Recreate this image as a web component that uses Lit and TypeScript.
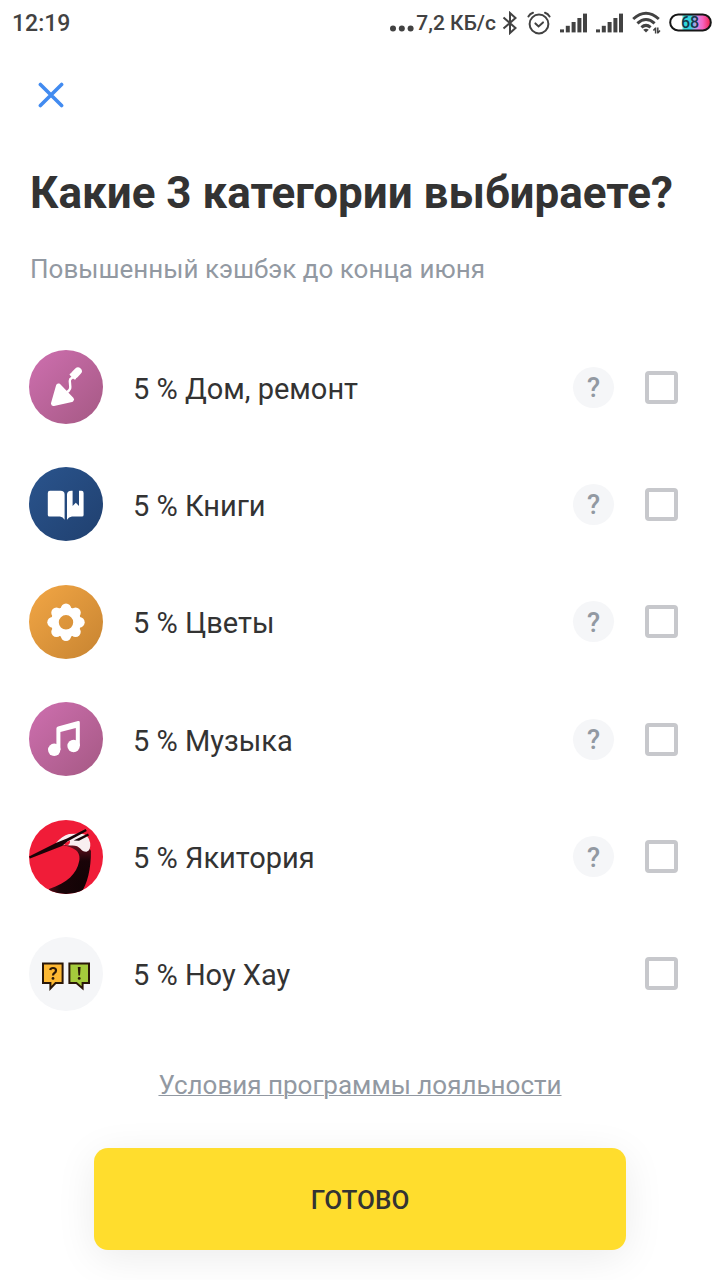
import { LitElement, html, svg, css, nothing } from "lit";
import { customElement, property, state } from "lit/decorators.js";

type IconName = "trowel" | "book" | "flower" | "music" | "crane" | "knowhow";

interface Category {
  id: string;
  title: string;
  icon: IconName;
  hint: boolean;
}

const CATEGORIES: Category[] = [
  { id: "home", title: "5 % Дом, ремонт", icon: "trowel", hint: true },
  { id: "books", title: "5 % Книги", icon: "book", hint: true },
  { id: "flowers", title: "5 % Цветы", icon: "flower", hint: true },
  { id: "music", title: "5 % Музыка", icon: "music", hint: true },
  { id: "yakitoria", title: "5 % Якитория", icon: "crane", hint: true },
  { id: "knowhow", title: "5 % Ноу Хау", icon: "knowhow", hint: false },
];

const PETALS = [0, 45, 90, 135, 180, 225, 270, 315];

const gradient = (from: string, to: string) => svg`
  <defs>
    <linearGradient id="bg" x1="0.1" y1="0.1" x2="0.9" y2="0.9">
      <stop offset="0" stop-color=${from}></stop>
      <stop offset="1" stop-color=${to}></stop>
    </linearGradient>
  </defs>
  <circle cx="37" cy="37" r="37" fill="url(#bg)"></circle>`;

const ICONS: Record<IconName, unknown> = {
  trowel: svg`
    ${gradient("#ca6dab", "#a95b88")}
    <path d="M29.5 36 L42.5 49.5 L24.5 53.5 Z" fill="#fff" stroke="#fff" stroke-width="5" stroke-linejoin="round"></path>
    <path d="M37 43 L40 40.5 Q41.5 39 41.3 37 L40.8 31 Q40.8 29 42.5 28.2 L45 26.5" fill="none" stroke="#fff" stroke-width="2.4"></path>
    <path d="M45.8 24.5 L49 21.2" stroke="#fff" stroke-width="7.6" stroke-linecap="round"></path>
    <path d="M41.8 24.5 L45.8 28.3" stroke="#fff" stroke-width="2.4" stroke-linecap="round"></path>`,
  book: svg`
    ${gradient("#29528a", "#214272")}
    <path d="M21 23.8 H31.5 Q35.6 23.8 35.6 27.5 V52.8 Q34 49.8 31 49.6 H20.5 Q18.8 49.6 18.8 48 V26 Q18.8 23.8 21 23.8 Z" fill="#fff"></path>
    <path d="M38 27.5 Q38 24 42.5 23.8 H43.6 V39 L46.8 35.8 L50 39 V23.8 H52.5 Q54.6 23.8 54.6 26 V48 Q54.6 49.6 53 49.6 H43 Q39.6 49.8 38 52.8 Z" fill="#fff"></path>`,
  flower: svg`
    ${gradient("#eea343", "#cb8733")}
    <circle cx="37" cy="37.3" r="11.2" fill="none" stroke="#fff" stroke-width="8"></circle>
    ${PETALS.map(
      (a) => svg`<circle cx="37" cy="23.8" r="5.2" fill="#fff" transform="rotate(${a} 37 37.3)"></circle>`
    )}`,
  music: svg`
    ${gradient("#ca6dab", "#a95b88")}
    <circle cx="25.2" cy="47.8" r="6.2" fill="#fff"></circle>
    <circle cx="44.6" cy="44" r="6.2" fill="#fff"></circle>
    <path d="M27.4 48 V26.5 Q27.4 24.8 29 24.4 L49 19 Q50.8 18.6 50.8 20.4 V44 H46.8 V26 L31.4 30 V48 Z" fill="#fff"></path>`,
  crane: svg`
    <defs>
      <clipPath id="disc"><circle cx="37" cy="37" r="37"></circle></clipPath>
      <radialGradient id="neck" cx="56" cy="66" r="42" gradientUnits="userSpaceOnUse">
        <stop offset="0" stop-color="#120305"></stop>
        <stop offset="0.6" stop-color="#1a0408"></stop>
        <stop offset="1" stop-color="#6a101e"></stop>
      </radialGradient>
    </defs>
    <g clip-path="url(#disc)">
      <rect width="74" height="74" fill="#f01c38"></rect>
      <path d="M32 25 Q42 26.4 47 30.3 Q51.4 34 50.2 41 C47.6 54 38.7 62.5 20 69 L20 76 L50 76 C58 66 62 50 62 31 L58 24 Z" fill="url(#neck)"></path>
      <path d="M27 23 Q33 16 40 14 L52 13.4 Q60 14.4 61.2 23 Q62 30.4 57.5 31.8 Q53.6 32 51.5 28.8 Q48 24.6 41 25.6 L33 24.6 Z" fill="#f8eef0"></path>
      <path d="M34.6 23.6 L41 20.6 Q41.4 24.8 38 25.4 Q35.4 25.4 34.6 23.6 Z" fill="#f01c38"></path>
      <path d="M0 36.4 L27.4 22.8 L38 18.4 L56.6 9 L57.8 11 L38.4 21.4 L33 26 L1 38.4 Z" fill="#180307"></path>
      <path d="M44.6 20.6 L59 13.6 L60 15.6 L50 20.8 Z" fill="#180307"></path>
    </g>`,
  knowhow: svg`
    <circle cx="37" cy="37" r="37" fill="#f5f6f8"></circle>
    <path d="M14 26.4 H33.6 V46 H26.6 L21.4 51.4 V46 H14 Z" fill="#fdb833" stroke="#2a1708" stroke-width="2"></path>
    <path d="M40.4 26.4 H60 V46 H53.6 V51.4 L47.4 46 H40.4 Z" fill="#a5cb3c" stroke="#2a1708" stroke-width="2"></path>
    <path d="M21.2 33 Q21.6 31 24 31 Q27 31 27 33.4 Q27 35 25.4 36 Q24 36.8 24 38.6" fill="none" stroke="#2a1708" stroke-width="2.2"></path>
    <circle cx="24" cy="41.4" r="1.4" fill="#2a1708"></circle>
    <path d="M48.8 30 H51.6 L51 38.6 H49.4 Z" fill="#2a1708"></path>
    <circle cx="50.2" cy="41.4" r="1.4" fill="#2a1708"></circle>`,
};

@customElement("category-icon")
class CategoryIcon extends LitElement {
  @property() name: IconName = "trowel";

  static styles = css`
    :host {
      display: block;
      flex: none;
      width: 74px;
      height: 74px;
    }
    .icon {
      display: block;
      width: 100%;
      height: 100%;
    }
  `;

  render() {
    return html`<svg class="icon" viewBox="0 0 74 74" aria-hidden="true">${ICONS[this.name]}</svg>`;
  }
}

@customElement("status-bar")
class StatusBar extends LitElement {
  static styles = css`
    :host {
      display: flex;
      align-items: center;
      justify-content: space-between;
      height: 46px;
      padding: 0 8px 0 12px;
      color: #424242;
      font-size: 23px;
      font-weight: 500;
    }
    .indicators {
      display: flex;
      align-items: center;
    }
    .speed {
      display: flex;
      align-items: center;
      font-size: 21px;
    }
    .indicators svg {
      display: block;
      flex: none;
    }
    .bluetooth {
      margin-left: 6px;
    }
    .alarm,
    .signal,
    .wifi {
      margin-left: 9px;
    }
    .battery {
      margin-left: 8px;
    }
    .level {
      font: 500 16px Roboto, sans-serif;
    }
  `;

  private signal() {
    return html`<svg class="signal" width="27" height="20" viewBox="0 0 27 20" fill="#424242" aria-hidden="true">
      <rect x="0" y="16.4" width="4" height="3"></rect>
      <rect x="5.8" y="12.8" width="4" height="6.6"></rect>
      <rect x="11.6" y="9" width="4" height="10.4"></rect>
      <rect x="17.4" y="5" width="4" height="14.4"></rect>
      <rect x="23" y="0.6" width="4" height="18.8"></rect>
    </svg>`;
  }

  render() {
    return html`
      <span class="clock">12:19</span>
      <div class="indicators">
        <span class="speed">
          <svg width="27" height="22" viewBox="0 0 27 22" fill="#424242" aria-hidden="true">
            <circle cx="4" cy="16.4" r="3"></circle>
            <circle cx="12.8" cy="16.4" r="3"></circle>
            <circle cx="21.6" cy="16.4" r="3"></circle>
          </svg>
          7,2 КБ/с
        </span>
        <svg class="bluetooth" width="16" height="24" viewBox="0 0 16 24" fill="none" stroke="#424242" stroke-width="2" aria-hidden="true">
          <path d="M1.5 6.5 L13.5 17 L8 22 V2 L13.5 7 L1.5 17.5"></path>
        </svg>
        <svg class="alarm" width="24" height="24" viewBox="0 0 24 24" fill="none" stroke="#424242" stroke-width="2" stroke-linecap="round" aria-hidden="true">
          <circle cx="12" cy="13" r="9.4"></circle>
          <path d="M8.4 12.4 L11.6 15.4 L16 11.4"></path>
          <path d="M1.4 5.4 Q3 2.8 6 1.8"></path>
          <path d="M22.6 5.4 Q21 2.8 18 1.8"></path>
        </svg>
        ${this.signal()} ${this.signal()}
        <svg class="wifi" width="29" height="24" viewBox="0 0 29 24" fill="none" stroke="#424242" stroke-width="3" aria-hidden="true">
          <path d="M1.2 8 Q14 -3.5 26.8 8"></path>
          <path d="M5.4 12.4 Q14 4.6 22.6 12.4"></path>
          <path d="M9.4 16.4 Q14 12.4 18.6 16.4"></path>
          <path d="M11.2 18.8 Q14 16.6 16.8 18.8 L14 21.6 Z" fill="#424242" stroke="none"></path>
          <path d="M23.6 16.4 V22.4 M21.4 19.6 L23.6 17 M25.8 16.4 V22.4 M28 19.6 L25.8 22" stroke-width="1.5"></path>
        </svg>
        <svg class="battery" width="43" height="20" viewBox="0 0 43 20" role="img" aria-label="68">
          <defs>
            <linearGradient id="charge">
              <stop offset="0.28" stop-color="#ffffff"></stop>
              <stop offset="0.34" stop-color="#2fd9d6"></stop>
              <stop offset="0.5" stop-color="#35d3e2"></stop>
              <stop offset="0.66" stop-color="#d98be8"></stop>
              <stop offset="0.8" stop-color="#f564c0"></stop>
              <stop offset="1" stop-color="#f2214a"></stop>
            </linearGradient>
          </defs>
          <rect x="1.2" y="1.4" width="40.6" height="16" rx="8" fill="url(#charge)" stroke="#161616" stroke-width="2"></rect>
          <text class="level" x="21" y="15" text-anchor="middle" fill="#15384a">68</text>
        </svg>
      </div>
    `;
  }
}

@customElement("app-root")
class AppRoot extends LitElement {
  @state() private selected = new Set<string>();

  static styles = css`
    * {
      box-sizing: border-box;
    }
    :host {
      display: flex;
      flex-direction: column;
      min-height: 100vh;
      box-sizing: border-box;
      background: #fff;
      color: #333;
      font-family: Roboto, sans-serif;
    }
    button {
      border: 0;
      padding: 0;
      font-family: inherit;
      cursor: pointer;
    }
    .close {
      display: grid;
      place-items: center;
      align-self: flex-start;
      width: 50px;
      height: 50px;
      margin: 24px 0 0 26px;
      background: none;
    }
    .head {
      padding: 0 30px;
    }
    .title {
      margin: 45px 0 0;
      font-size: 44px;
      line-height: 56px;
      font-weight: 700;
    }
    .subtitle {
      margin: 32px 0 0;
      font-size: 26px;
      line-height: 32px;
      color: #9299a2;
    }
    .list {
      display: flex;
      flex: 1;
      flex-direction: column;
      justify-content: space-between;
      gap: 24px;
      margin: 65px 0 0;
      padding: 0 42px 0 29px;
      list-style: none;
    }
    .row {
      display: flex;
      align-items: center;
    }
    .name {
      flex: 1;
      padding: 3px 0 0 30px;
      font-size: 29px;
      line-height: 36px;
    }
    .hint {
      width: 41px;
      height: 41px;
      margin-right: 31px;
      padding-top: 2px;
      border-radius: 50%;
      background: #f5f6f8;
      color: #9299a2;
      font-size: 27px;
      font-weight: 500;
    }
    .check {
      appearance: none;
      width: 33px;
      height: 33px;
      margin: 0;
      border: 4px solid #c7c8cc;
      border-radius: 4px;
      background: #fff;
    }
    .check:checked {
      border-color: #ffdd2d;
      background: #ffdd2d;
    }
    .foot {
      display: flex;
      flex-direction: column;
      align-items: center;
      padding: 58px 94px 30px;
    }
    .terms {
      color: #9299a2;
      font-size: 26px;
      line-height: 32px;
      text-decoration: underline;
      text-decoration-thickness: 1px;
    }
    .done {
      width: 100%;
      height: 102px;
      margin-top: 47px;
      padding-top: 2px;
      border-radius: 14px;
      background: #ffdd2d;
      box-shadow: 0 8px 40px rgba(0, 0, 0, 0.08);
      color: #333;
      font-size: 26px;
      font-weight: 500;
    }
  `;

  private toggle(id: string, on: boolean) {
    const next = new Set(this.selected);
    if (on) next.add(id);
    else next.delete(id);
    this.selected = next;
  }

  render() {
    return html`
      <status-bar></status-bar>
      <button class="close" type="button" aria-label="Закрыть">
        <svg width="26" height="26" viewBox="0 0 26 26" fill="none" stroke="#428bf0" stroke-width="3.6" stroke-linecap="round">
          <path d="M2.4 2.4 L23.6 23.6 M23.6 2.4 L2.4 23.6"></path>
        </svg>
      </button>
      <header class="head">
        <h1 class="title">Какие 3 категории выбираете?</h1>
        <p class="subtitle">Повышенный кэшбэк до конца июня</p>
      </header>
      <ul class="list">
        ${CATEGORIES.map(
          (c) => html`<li class="row">
            <category-icon name=${c.icon}></category-icon>
            <label class="name" for=${c.id}>${c.title}</label>
            ${c.hint ? html`<button class="hint" type="button">?</button>` : nothing}
            <input
              class="check"
              type="checkbox"
              id=${c.id}
              .checked=${this.selected.has(c.id)}
              @change=${(e: Event) => this.toggle(c.id, (e.target as HTMLInputElement).checked)}
            />
          </li>`
        )}
      </ul>
      <footer class="foot">
        <a class="terms" href="#terms">Условия программы лояльности</a>
        <button class="done" type="button">ГОТОВО</button>
      </footer>
    `;
  }
}
